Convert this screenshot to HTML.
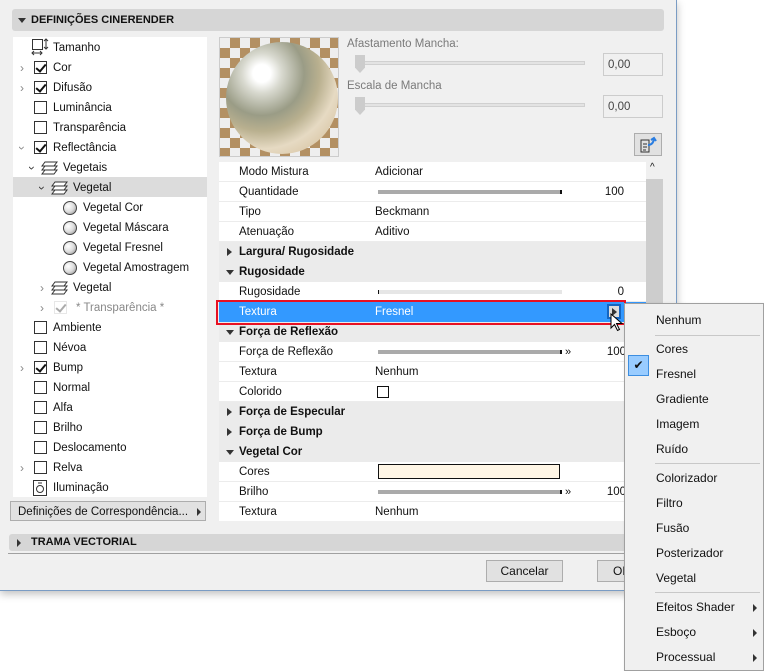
<!DOCTYPE html>
<html><head><meta charset="utf-8"><style>
*{box-sizing:border-box;margin:0;padding:0}
body{width:764px;height:671px;background:#fff;font-family:"Liberation Sans",sans-serif;font-size:11.5px;color:#111;position:relative;overflow:hidden}
.abs{position:absolute}
#win{left:0;top:0;width:677px;height:591px;background:#f0f0f0;border-right:1px solid #7a9cc4;border-bottom:1px solid #7a9cc4;box-shadow:0 3px 8px rgba(0,0,0,.25)}
.bar{background:#d6d6d6;border-radius:3px;font-weight:bold;font-size:11px;}
.tri{display:inline-block;width:0;height:0}
.tdown{border-left:4px solid transparent;border-right:4px solid transparent;border-top:5px solid #333}
.tright{border-top:4px solid transparent;border-bottom:4px solid transparent;border-left:5px solid #333}
.tree{left:13px;top:37px;width:194px;height:460px;background:#fff}
.row{position:absolute;height:20px;line-height:22px;white-space:nowrap}
.cb{position:absolute;width:13px;height:13px;border:1px solid #333;background:#fff;top:4px}
.cb.on::after{content:"";position:absolute;left:3px;top:0px;width:4px;height:8px;border:solid #111;border-width:0 2px 2px 0;transform:rotate(40deg)}
.chev{position:absolute;top:0;color:#888;font-size:12px}
.ball{position:absolute;top:4px;width:14px;height:14px;border-radius:50%;border:1px solid #444;background:radial-gradient(circle at 35% 35%,#fff,#ddd 50%,#888)}
.prop{left:219px;top:162px;width:427px;height:359px;background:#fff;overflow:hidden}
.pr{position:absolute;left:0;width:427px;height:20px;line-height:21px;border-bottom:1px solid #ececec}
.pr.cat{background:#ebebeb;font-weight:bold;border-bottom:none}
.pr .l{position:absolute;left:20px}
.pr .v{position:absolute;left:156px}
.pr .n{position:absolute;right:22px}
.sl{position:absolute;left:159px;top:8px;height:4px;background:#aaa;border-right:2px solid #111}
.menu{left:624px;top:303px;width:140px;height:368px;background:#f0f0f0;border:1px solid #a0a0a0;box-shadow:2px 2px 4px rgba(0,0,0,.2)}
.mi{position:absolute;left:31px;height:20px;line-height:20px;font-size:12px}
.sep{position:absolute;left:30px;right:3px;height:1px;background:#c8c8c8}
.ar{position:absolute;right:6px;top:6px;border-top:4px solid transparent;border-bottom:4px solid transparent;border-left:4px solid #333}
.btn{background:#e1e1e1;border:1px solid #adadad;text-align:center;line-height:20px;font-size:12px}
</style></head><body>
<div id="win" class="abs">
<div class="abs bar" style="left:12px;top:9px;width:652px;height:22px;line-height:22px;padding-left:19px">DEFINIÇÕES CINERENDER</div>
<span class="abs tri tdown" style="left:18px;top:18px"></span>

<div class="abs tree">
 <div class="row" style="left:18px;top:0"><svg width="18" height="18" viewBox="0 0 18 18" style="position:absolute;top:1px"><rect x="1.5" y="1.5" width="10" height="10" fill="none" stroke="#333"/><path d="M15 1v10M13 3l2-2 2 2M13 9l2 2 2-2M1 15h10M3 13l-2 2 2 2M9 13l2 2-2 2" stroke="#333" fill="none"/></svg><span style="position:absolute;left:22px">Tamanho</span></div>
 <div class="row" style="left:0;top:20px"><span class="chev" style="left:7px">›</span><span class="cb on" style="left:21px"></span><span style="position:absolute;left:40px">Cor</span></div>
 <div class="row" style="left:0;top:40px"><span class="chev" style="left:7px">›</span><span class="cb on" style="left:21px"></span><span style="position:absolute;left:40px">Difusão</span></div>
 <div class="row" style="left:0;top:60px"><span class="cb" style="left:21px"></span><span style="position:absolute;left:40px">Luminância</span></div>
 <div class="row" style="left:0;top:80px"><span class="cb" style="left:21px"></span><span style="position:absolute;left:40px">Transparência</span></div>
 <div class="row" style="left:0;top:100px"><span class="chev" style="left:7px;transform:rotate(90deg)">›</span><span class="cb on" style="left:21px"></span><span style="position:absolute;left:40px">Reflectância</span></div>
 <div class="row" style="left:0;top:120px;width:194px"><span class="chev" style="left:17px;transform:rotate(90deg);color:#333">›</span><svg width="18" height="16" viewBox="0 0 18 16" style="position:absolute;left:28px;top:3px"><path d="M4 2h12l-3 4H1zM4 6h12l-3 4H1zM4 10h12l-3 4H1z" fill="#fff" stroke="#333"/></svg><span style="position:absolute;left:50px">Vegetais</span></div>
 <div class="row" style="left:0;top:140px;width:194px;background:#dcdcdc"><span class="chev" style="left:27px;transform:rotate(90deg);color:#333">›</span><svg width="18" height="16" viewBox="0 0 18 16" style="position:absolute;left:38px;top:3px"><path d="M4 2h12l-3 4H1zM4 6h12l-3 4H1zM4 10h12l-3 4H1z" fill="#fff" stroke="#333"/></svg><span style="position:absolute;left:60px">Vegetal</span></div>
 <div class="row" style="left:0;top:160px"><span class="ball" style="left:50px"></span><span style="position:absolute;left:70px">Vegetal Cor</span></div>
 <div class="row" style="left:0;top:180px"><span class="ball" style="left:50px"></span><span style="position:absolute;left:70px">Vegetal Máscara</span></div>
 <div class="row" style="left:0;top:200px"><span class="ball" style="left:50px"></span><span style="position:absolute;left:70px">Vegetal Fresnel</span></div>
 <div class="row" style="left:0;top:220px"><span class="ball" style="left:50px"></span><span style="position:absolute;left:70px">Vegetal Amostragem</span></div>
 <div class="row" style="left:0;top:240px"><span class="chev" style="left:27px">›</span><svg width="18" height="16" viewBox="0 0 18 16" style="position:absolute;left:38px;top:3px"><path d="M4 2h12l-3 4H1zM4 6h12l-3 4H1zM4 10h12l-3 4H1z" fill="#fff" stroke="#333"/></svg><span style="position:absolute;left:60px">Vegetal</span></div>
 <div class="row" style="left:0;top:260px;color:#888"><span class="chev" style="left:27px">›</span><span class="cb on" style="left:41px;border-color:#bbb;opacity:.35"></span><span style="position:absolute;left:63px">* Transparência *</span></div>
 <div class="row" style="left:0;top:280px"><span class="cb" style="left:21px"></span><span style="position:absolute;left:40px">Ambiente</span></div>
 <div class="row" style="left:0;top:300px"><span class="cb" style="left:21px"></span><span style="position:absolute;left:40px">Névoa</span></div>
 <div class="row" style="left:0;top:320px"><span class="chev" style="left:7px">›</span><span class="cb on" style="left:21px"></span><span style="position:absolute;left:40px">Bump</span></div>
 <div class="row" style="left:0;top:340px"><span class="cb" style="left:21px"></span><span style="position:absolute;left:40px">Normal</span></div>
 <div class="row" style="left:0;top:360px"><span class="cb" style="left:21px"></span><span style="position:absolute;left:40px">Alfa</span></div>
 <div class="row" style="left:0;top:380px"><span class="cb" style="left:21px"></span><span style="position:absolute;left:40px">Brilho</span></div>
 <div class="row" style="left:0;top:400px"><span class="cb" style="left:21px"></span><span style="position:absolute;left:40px">Deslocamento</span></div>
 <div class="row" style="left:0;top:420px"><span class="chev" style="left:7px">›</span><span class="cb" style="left:21px"></span><span style="position:absolute;left:40px">Relva</span></div>
 <div class="row" style="left:0;top:440px"><svg width="14" height="16" viewBox="0 0 14 16" style="position:absolute;left:20px;top:3px"><rect x="0.5" y="0.5" width="13" height="15" fill="none" stroke="#333"/><circle cx="7" cy="9" r="3.5" fill="none" stroke="#333"/><path d="M5 3h4" stroke="#333"/></svg><span style="position:absolute;left:40px">Iluminação</span></div>
</div>
<div class="abs btn" style="left:10px;top:501px;width:196px;height:20px;text-align:left;padding-left:7px;font-size:11.5px">Definições de Correspondência...<span class="tri tright" style="position:absolute;right:4px;top:6px;border-left-width:4px"></span></div>

<div class="abs" style="left:219px;top:37px;width:120px;height:120px;border:1px solid #ccc;background:#ddd;overflow:hidden">
 <div style="position:absolute;left:0;top:0;width:120px;height:120px;background:repeating-conic-gradient(#a87d44 0 25%,#f2f2f2 0 50%) 0 0/20px 20px;opacity:.8"></div>
 <div style="position:absolute;left:6px;top:4px;width:112px;height:112px;border-radius:50%;background:radial-gradient(circle at 32% 28%,#fff 0,#fff 8%,#d8d9cf 18%,#9a9c86 38%,#b9b08f 52%,#e6dac3 68%,#d9c6a5 85%,#a88e66 100%)"></div>
</div>
<div class="abs" style="left:347px;top:38px;color:#7a7a7a;font-size:11.5px">Afastamento Mancha:</div>
<div class="abs" style="left:356px;top:61px;width:229px;height:4px;background:#e3e3e3;border:1px solid #d0d0d0"></div>
<div class="abs" style="left:355px;top:55px;width:10px;height:18px;background:#ccc;clip-path:polygon(0 0,100% 0,100% 70%,50% 100%,0 70%)"></div>
<div class="abs" style="left:603px;top:53px;width:60px;height:23px;border:1px solid #ccc;background:#f0f0f0;line-height:23px;padding-left:4px;color:#444">0,00</div>
<div class="abs" style="left:347px;top:80px;color:#7a7a7a;font-size:11.5px">Escala de Mancha</div>
<div class="abs" style="left:356px;top:103px;width:229px;height:4px;background:#e3e3e3;border:1px solid #d0d0d0"></div>
<div class="abs" style="left:355px;top:97px;width:10px;height:18px;background:#ccc;clip-path:polygon(0 0,100% 0,100% 70%,50% 100%,0 70%)"></div>
<div class="abs" style="left:603px;top:95px;width:60px;height:23px;border:1px solid #ccc;background:#f0f0f0;line-height:23px;padding-left:4px;color:#444">0,00</div>
<div class="abs" style="left:634px;top:133px;width:28px;height:23px;border:1px solid #adadad;background:#e1e1e1"><svg width="20" height="18" viewBox="0 0 20 18" style="position:absolute;left:4px;top:2px"><path d="M2 4h8v12H2z" fill="none" stroke="#333"/><path d="M4 8h4M4 11h4M4 14h3" stroke="#333"/><path d="M9 9q5 0 6-6M12 4l3-2 2 3" stroke="#2a7de1" stroke-width="2" fill="none"/></svg></div>

<div class="abs prop">
 <div class="pr" style="top:0"><span class="l">Modo Mistura</span><span class="v">Adicionar</span></div>
 <div class="pr" style="top:20px"><span class="l">Quantidade</span><span class="sl" style="width:184px"></span><span class="n">100</span></div>
 <div class="pr" style="top:40px"><span class="l">Tipo</span><span class="v">Beckmann</span></div>
 <div class="pr" style="top:60px"><span class="l">Atenuação</span><span class="v">Aditivo</span></div>
 <div class="pr cat" style="top:80px"><span class="tri tright" style="position:absolute;left:8px;top:6px"></span><span class="l">Largura/ Rugosidade</span></div>
 <div class="pr cat" style="top:100px"><span class="tri tdown" style="position:absolute;left:7px;top:8px"></span><span class="l">Rugosidade</span></div>
 <div class="pr" style="top:120px"><span class="l">Rugosidade</span><span class="sl" style="width:184px;background:#e6e6e6;border-right:none;border-left:1px solid #111"></span><span class="n">0</span></div>
 <div class="pr" style="top:140px;background:#3399ff;color:#fff;border-bottom:none"><span class="l">Textura</span><span class="v">Fresnel</span><span style="position:absolute;left:388px;top:2px;width:14px;height:15px;border:2px solid #1565c0;background:#ddd"><span class="tri tright" style="position:absolute;left:3px;top:2px"></span></span></div>
 <div class="pr cat" style="top:160px"><span class="tri tdown" style="position:absolute;left:7px;top:8px"></span><span class="l">Força de Reflexão</span></div>
 <div class="pr" style="top:180px"><span class="l">Força de Reflexão</span><span class="sl" style="width:184px"></span><span style="position:absolute;left:346px;top:0;font-size:11px">»</span><span class="n" style="right:20px">100</span></div>
 <div class="pr" style="top:200px"><span class="l">Textura</span><span class="v">Nenhum</span></div>
 <div class="pr" style="top:220px"><span class="l">Colorido</span><span style="position:absolute;left:158px;top:4px;width:12px;height:12px;border:1px solid #111"></span></div>
 <div class="pr cat" style="top:240px"><span class="tri tright" style="position:absolute;left:8px;top:6px"></span><span class="l">Força de Especular</span></div>
 <div class="pr cat" style="top:260px"><span class="tri tright" style="position:absolute;left:8px;top:6px"></span><span class="l">Força de Bump</span></div>
 <div class="pr cat" style="top:280px"><span class="tri tdown" style="position:absolute;left:7px;top:8px"></span><span class="l">Vegetal Cor</span></div>
 <div class="pr" style="top:300px"><span class="l">Cores</span><span style="position:absolute;left:159px;top:2px;width:182px;height:15px;border:1px solid #111;background:#fff6e6"></span></div>
 <div class="pr" style="top:320px"><span class="l">Brilho</span><span class="sl" style="width:184px"></span><span style="position:absolute;left:346px;top:0;font-size:11px">»</span><span class="n" style="right:20px">100</span></div>
 <div class="pr" style="top:340px"><span class="l">Textura</span><span class="v">Nenhum</span></div>
</div>
<div class="abs" style="left:646px;top:162px;width:17px;height:359px;background:#f0f0f0"><div style="position:absolute;left:0;top:17px;width:17px;height:140px;background:#cdcdcd"></div><span style="position:absolute;left:4px;top:0;font-size:10px">^</span></div>
<div class="abs" style="left:216px;top:300px;width:410px;height:25px;border:2px solid #e81123"></div>
<svg class="abs" style="left:610px;top:313px" width="14" height="20" viewBox="0 0 14 20"><path d="M1 1v14l3.5-3.5 3 6 2-1-3-6H12z" fill="#fff" stroke="#000"/></svg>

<div class="abs bar" style="left:9px;top:534px;width:660px;height:17px;line-height:17px;padding-left:22px">TRAMA VECTORIAL</div>
<span class="abs tri tright" style="left:17px;top:539px;border-left-width:4px"></span>
<div class="abs" style="left:8px;top:553px;width:662px;height:1px;background:#a0a0a0"></div>
<div class="abs btn" style="left:486px;top:560px;width:77px;height:22px">Cancelar</div>
<div class="abs btn" style="left:597px;top:560px;width:77px;height:22px;text-align:left;padding-left:15px">OK</div>
</div>

<div class="abs menu">
 <div class="mi" style="top:6px">Nenhum</div>
 <div class="sep" style="top:31px"></div>
 <div class="mi" style="top:35px">Cores</div>
 <div style="position:absolute;left:3px;top:51px;width:21px;height:21px;background:#99ccff;border:1px solid #3d8ee0;text-align:center;line-height:19px;font-size:12px">✔</div>
 <div class="mi" style="top:60px">Fresnel</div>
 <div class="mi" style="top:85px">Gradiente</div>
 <div class="mi" style="top:110px">Imagem</div>
 <div class="mi" style="top:135px">Ruído</div>
 <div class="sep" style="top:159px"></div>
 <div class="mi" style="top:164px">Colorizador</div>
 <div class="mi" style="top:189px">Filtro</div>
 <div class="mi" style="top:214px">Fusão</div>
 <div class="mi" style="top:239px">Posterizador</div>
 <div class="mi" style="top:264px">Vegetal</div>
 <div class="sep" style="top:288px"></div>
 <div class="mi" style="top:293px;width:105px">Efeitos Shader</div><span class="ar" style="top:300px"></span>
 <div class="mi" style="top:318px">Esboço</div><span class="ar" style="top:325px"></span>
 <div class="mi" style="top:343px">Processual</div><span class="ar" style="top:350px"></span>
</div>
</body></html>
